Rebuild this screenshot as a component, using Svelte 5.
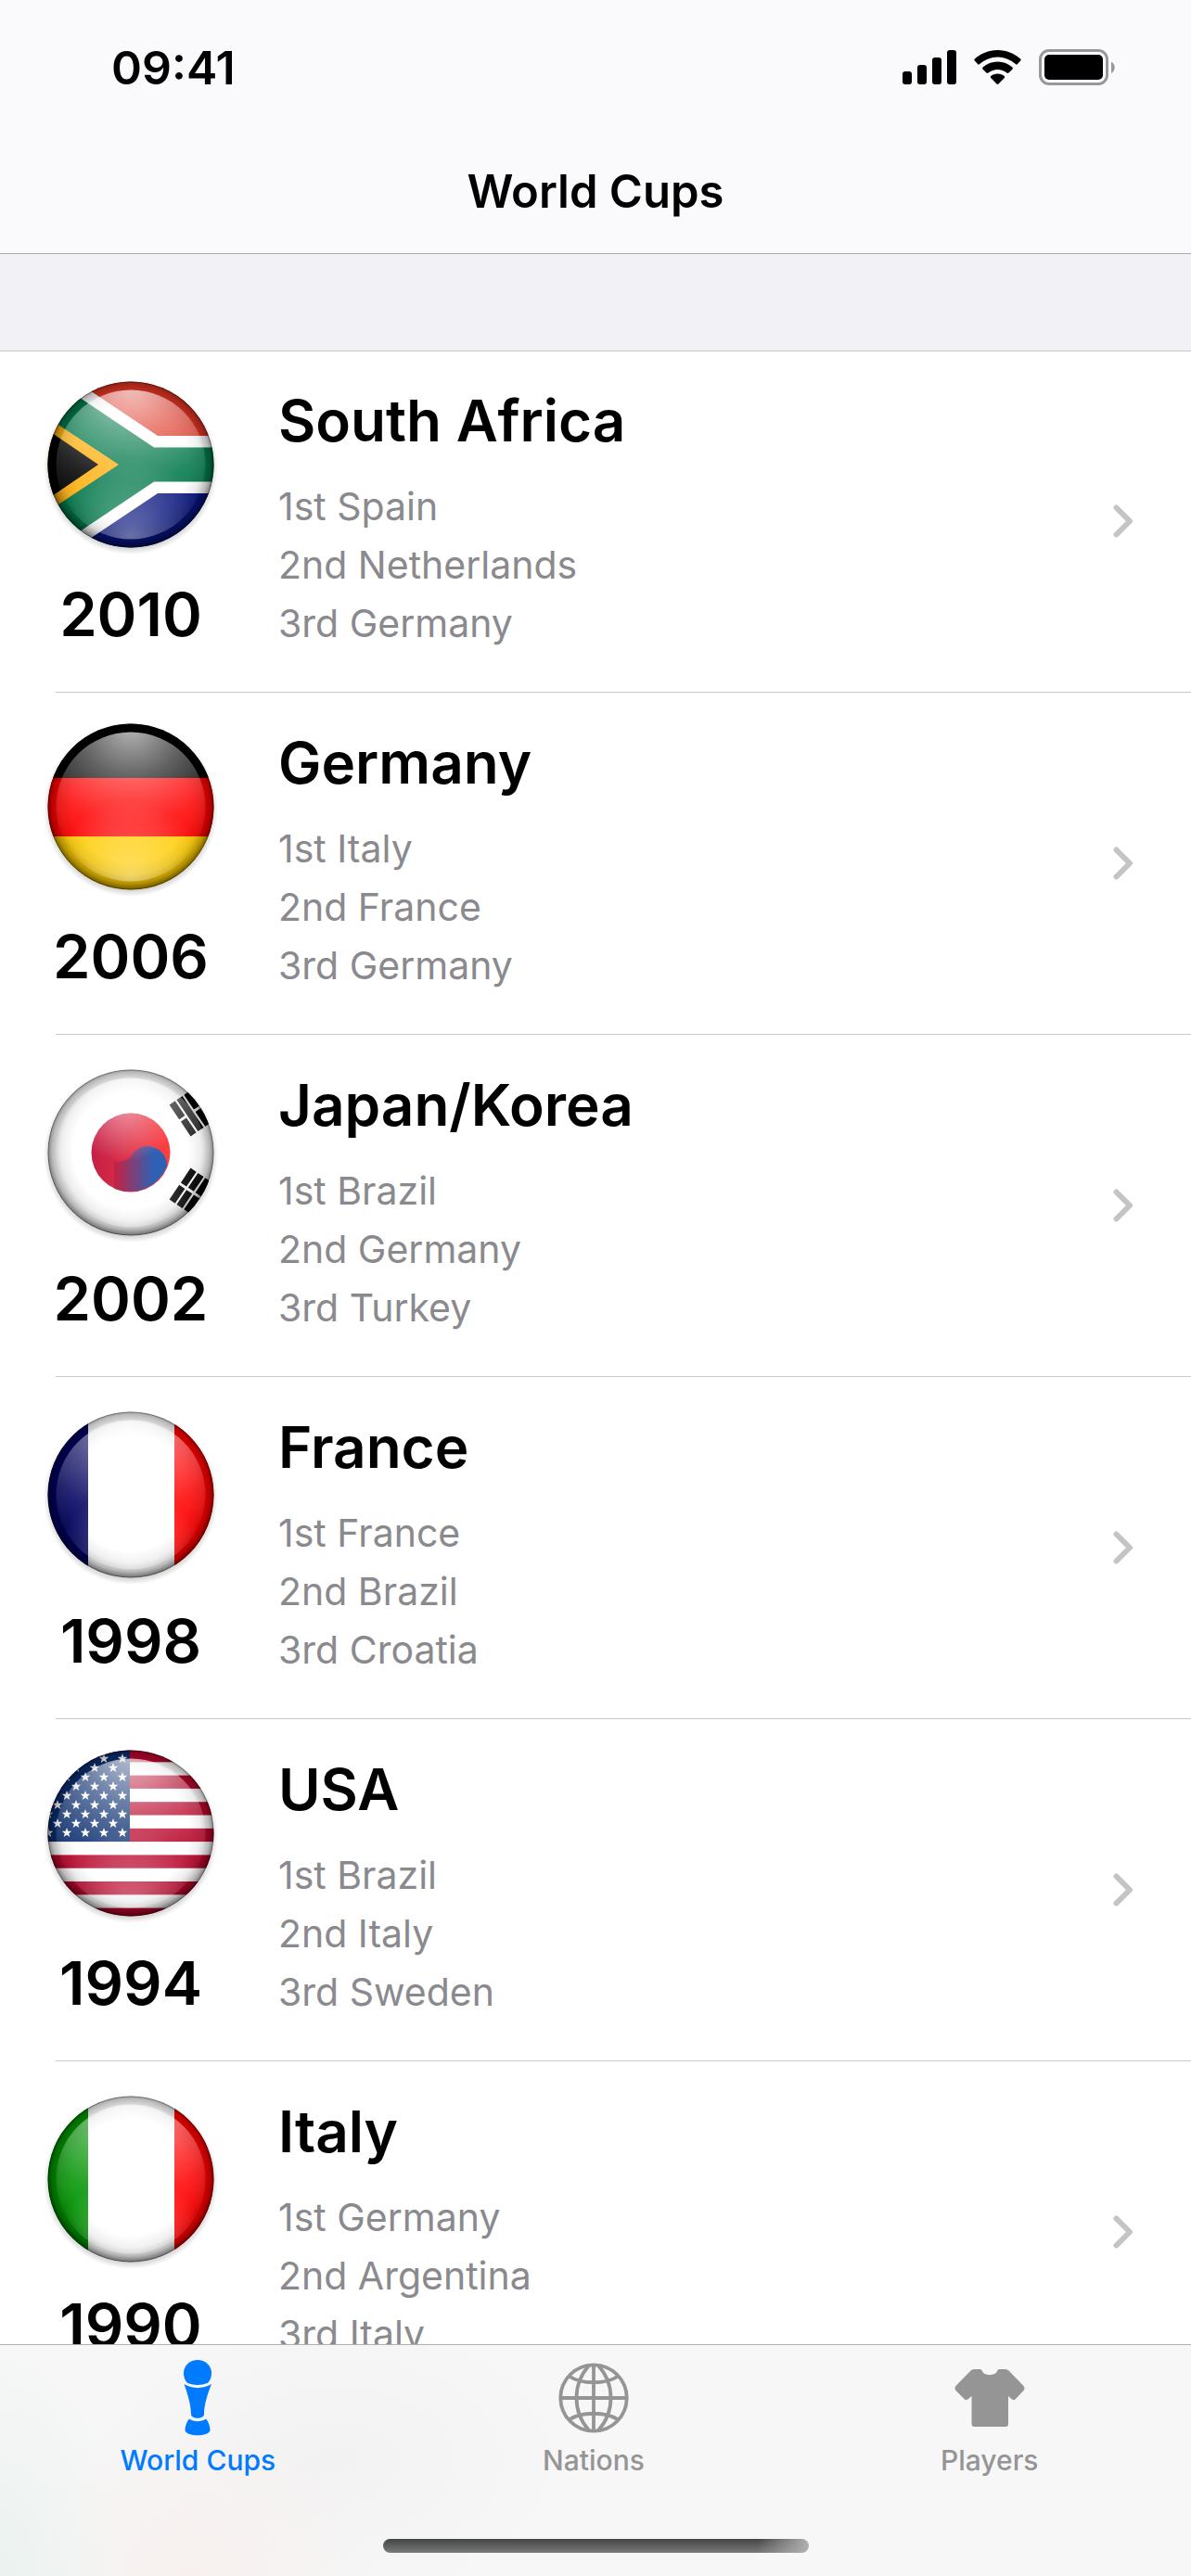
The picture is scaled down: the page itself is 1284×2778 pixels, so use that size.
<script lang="ts">
	type Cup = {
		year: number;
		host: string;
		flag: string;
		// the icons do not all sit at the same height in their box
		drop: number;
		podium: string[];
	};

	const cups: Cup[] = [
		{ year: 2010, host: 'South Africa', flag: 'za', drop: 0, podium: ['1st Spain', '2nd Netherlands', '3rd Germany'] },
		{ year: 2006, host: 'Germany', flag: 'de', drop: 0, podium: ['1st Italy', '2nd France', '3rd Germany'] },
		{ year: 2002, host: 'Japan/Korea', flag: 'kr', drop: 4, podium: ['1st Brazil', '2nd Germany', '3rd Turkey'] },
		{ year: 1998, host: 'France', flag: 'fr', drop: 4, podium: ['1st France', '2nd Brazil', '3rd Croatia'] },
		{ year: 1994, host: 'USA', flag: 'us', drop: 0, podium: ['1st Brazil', '2nd Italy', '3rd Sweden'] },
		{ year: 1990, host: 'Italy', flag: 'it', drop: 4, podium: ['1st Germany', '2nd Argentina', '3rd Italy'] }
	];

	const tabs = [
		{ id: 'cups', label: 'World Cups' },
		{ id: 'nations', label: 'Nations' },
		{ id: 'players', label: 'Players' }
	];

	let active = $state('cups');

	const STAR = 'M0-5.6 1.4-1.8 5.3-1.7 2.2.7 3.3 4.5 0 2.3-3.3 4.5-2.2.7-5.3-1.7-1.4-1.8Z';

	const stars: { x: number; y: number }[] = [];
	for (let row = 0; row < 9; row++) {
		const start = row % 2 === 0 ? -9 : -19;
		for (let col = 0; col < 5; col++) {
			stars.push({ x: start - col * 20, y: -80.5 + row * 10 });
		}
	}
</script>

<svelte:head>
	<title>World Cups</title>
</svelte:head>

{#snippet flagArt(code: string)}
	{#if code === 'za'}
		<rect x="-100" y="-100" width="200" height="100" fill="#dd3322" />
		<rect x="-100" width="200" height="100" fill="#06137c" />
		<path d="M-110-124 29-31H100V31H29L-110 124Z" fill="#fff" />
		<path d="M-110-109 25-18.500H100V18.500H25L-110 109Z" fill="#007749" />
		<path d="M-110-64-13 0-110 64Z" fill="#ffb010" />
		<path d="M-110-51-35 0-110 51Z" fill="#000" />
	{:else if code === 'de'}
		<rect x="-100" y="-100" width="200" height="69" fill="#000" />
		<rect x="-100" y="-31" width="200" height="63" fill="#ff0000" />
		<rect x="-100" y="32" width="200" height="70" fill="#ffcc00" />
	{:else if code === 'kr'}
		<rect x="-100" y="-100" width="200" height="200" fill="#fff" />
		<g fill="#000">
			<g transform="translate(64 -42) rotate(56)">
				<path d="M-20.500 5.800h19v7.400h-19zM1.500 5.800h19v7.400h-19zM-20.500-3.700h41v7.400h-41zM-20.500-13.200h19v7.400h-19zM1.500-13.200h19v7.400h-19z" />
			</g>
			<g transform="translate(64 41) rotate(-56)">
				<path d="M-20.500 5.800h19v7.400h-19zM1.500 5.800h19v7.400h-19zM-20.500-3.700h19v7.400h-19zM1.500-3.700h19v7.400h-19zM-20.500-13.200h19v7.400h-19zM1.500-13.200h19v7.400h-19z" />
			</g>
		</g>
	{:else if code === 'us'}
		<rect x="-100" y="-100" width="200" height="200" fill="#fff" />
		{#each [0, 2, 4, 6, 8, 10, 12] as stripe}
			<rect x="-100" y={-91 + stripe * 14.3} width="200" height="14.3" fill="#b8062b" />
		{/each}
		<rect x="-100" y="-100" width="99" height="109" fill="#0a2d6e" />
		{#each stars as star}
			<path d={STAR} transform="translate({star.x} {star.y})" fill="#fff" />
		{/each}
	{:else}
		<rect x="-100" y="-100" width="200" height="200" fill="#fff" />
		<rect x="-100" y="-100" width="54" height="200" fill={code === 'fr' ? '#00005e' : '#009200'} />
		<rect x="47" y="-100" width="54" height="200" fill="#ff0000" />
	{/if}
{/snippet}

{#snippet flagIcon(code: string, drop: number)}
	<svg class="flag" viewBox="-100 -100 200 200" aria-hidden="true">
		<defs>
			<clipPath id="disc-{code}"><circle r="89.500" /></clipPath>
			<radialGradient id="edge-{code}" gradientUnits="userSpaceOnUse" cx="0" cy="-2" r="92">
				<stop offset="0.680" stop-opacity="0" />
				<stop offset="0.820" stop-opacity="0.080" />
				<stop offset="0.920" stop-opacity="0.270" />
				<stop offset="1" stop-opacity="0.600" />
			</radialGradient>
			<radialGradient id="top-{code}" gradientUnits="userSpaceOnUse" cx="0" cy="-88" r="155">
				<stop offset="0" stop-color="#fff" stop-opacity="0.720" />
				<stop offset="0.350" stop-color="#fff" stop-opacity="0.400" />
				<stop offset="0.700" stop-color="#fff" stop-opacity="0.140" />
				<stop offset="1" stop-color="#fff" stop-opacity="0" />
			</radialGradient>
			<radialGradient id="low-{code}" gradientUnits="userSpaceOnUse" cx="0" cy="78" r="84">
				<stop offset="0" stop-color="#fff" stop-opacity="0.400" />
				<stop offset="1" stop-color="#fff" stop-opacity="0" />
			</radialGradient>
			<radialGradient id="shade-{code}">
				<stop offset="0.860" stop-opacity="0.300" />
				<stop offset="1" stop-opacity="0" />
			</radialGradient>
			{#if code === 'kr'}
				<linearGradient id="taeguk-red">
					<stop offset="0" stop-color="#c41f45" />
					<stop offset="0.400" stop-color="#d92c48" />
					<stop offset="1" stop-color="#ff4040" />
				</linearGradient>
				<linearGradient id="taeguk-blue" gradientUnits="userSpaceOnUse" x1="-18" y1="0" x2="24" y2="0">
					<stop offset="0" stop-color="#c8213f" />
					<stop offset="1" stop-color="#2e60b4" />
				</linearGradient>
				<radialGradient id="taeguk-shine" gradientUnits="userSpaceOnUse" cx="-6" cy="-52" r="62">
					<stop offset="0" stop-color="#fff" stop-opacity="0.500" />
					<stop offset="1" stop-color="#fff" stop-opacity="0" />
				</radialGradient>
			{/if}
		</defs>
		<g transform="translate(0 {drop})">
			<circle cy="3" r="94" fill="url(#shade-{code})" />
			<g clip-path="url(#disc-{code})">
				{@render flagArt(code)}
				<circle r="90" fill="url(#edge-{code})" />
				<circle r="80.500" fill="url(#top-{code})" />
				<circle r="80.500" fill="url(#low-{code})" />
				{#if code === 'kr'}
					<circle r="42.500" fill="url(#taeguk-red)" />
					<path d="M-18 10C-2 10 0 4 4-1A20.700 20.700 0 0 1 39 14A42.500 42.500 0 0 1-18 38.500Z" fill="url(#taeguk-blue)" />
					<circle r="42.500" fill="url(#taeguk-shine)" />
				{/if}
			</g>
			<circle r="89" fill="none" stroke="#000" stroke-opacity="0.300" />
		</g>
	</svg>
{/snippet}

{#snippet tabIcon(id: string)}
	<svg class="tab-icon" viewBox="0 0 84 84" aria-hidden="true">
		{#if id === 'cups'}
			<g fill="currentColor">
				<path d="M42 1C50 1 57 7 57 15C57 20 55 24 52.500 26C46 28.500 38 28.500 31.500 26C29 24 27 20 27 15C27 7 34 1 42 1Z" />
				<path d="M27.500 27C36 32.500 48 32.500 57 27C53 37 49 49 49 60C48 65 36 65 35 60C35 49 31 37 27.500 27Z" />
				<path d="M33 64.500C38 68 46 68 51 64.500C54 68 55.500 73 55.500 77C54 84 30 84 28.500 77C28.500 73 30 68 33 64.500Z" />
			</g>
		{:else if id === 'nations'}
			<g fill="none" stroke="currentColor" stroke-width="3.800">
				<circle cx="42" cy="42" r="35.700" />
				<path d="M42 6V78M6 42H78M37 7C19 27 19 57 37 77M47 7C65 27 65 57 47 77M15.500 18.500C29 27.500 55 27.500 68.500 18.500M15.500 65.500C29 56.500 55 56.500 68.500 65.500" />
			</g>
		{:else}
			<path
				d="M25 11H31.500Q33.500 11 34 13C35.500 18.500 48.500 18.500 50 13Q50.500 11 52.500 11H59Q61 11 62.500 12.500L78.500 29Q80.500 31.500 78.500 34L69.500 43.500Q67.500 45 65.500 43L62 40V70Q62 73 59 73H25.500Q22.500 73 22.500 70V40L19 43Q17 45 15 43.500L5.500 34Q3.500 31.500 5.500 29L21.500 12.500Q23 11 25 11Z"
				fill="currentColor"
			/>
		{/if}
	</svg>
{/snippet}

<div class="app">
	<header class="top-bar">
		<div class="status">
			<span class="time">09:41</span>
			<svg class="status-icons" viewBox="0 0 230 40" aria-hidden="true">
				<rect x="0" y="24" width="10" height="14" rx="3" />
				<rect x="16" y="17" width="10" height="21" rx="3" />
				<rect x="32" y="9" width="10" height="29" rx="3" />
				<rect x="48" y="1" width="10" height="37" rx="3" />
				<path d="M102.500 1C112 1 121 5 127.200 10.500Q128.300 11.500 127.200 12.600L124 16Q123 17 121.900 16C116 11 109.500 8.500 102.500 8.500C95.500 8.500 89 11 83.100 16Q82 17 81 16L77.800 12.600Q76.700 11.500 77.800 10.500C84 5 93 1 102.500 1Z" />
				<path d="M102.500 13.500C108.500 13.500 114 15.800 118.400 19.500Q119.500 20.600 118.400 21.700L114.500 25.500Q113.500 26.300 112.400 25.500C106.500 20.700 98.500 20.700 92.600 25.500Q91.500 26.300 90.500 25.500L86.600 21.700Q85.500 20.600 86.600 19.500C91 15.800 96.500 13.500 102.500 13.500Z" />
				<path d="M102.500 26.500C105.500 26.500 108 27.400 109.800 29Q110.800 30 109.800 31L103.500 37.500Q102.500 38.300 101.500 37.500L95.200 31Q94.200 30 95.200 29C97 27.400 99.500 26.500 102.500 26.500Z" />
				<rect x="148.500" y="1.500" width="72" height="36" rx="9.500" fill="none" stroke="#98989a" stroke-width="3" />
				<rect x="153" y="6" width="63" height="27" rx="5" />
				<path d="M225 13.500C230 16 230 23.500 225 26Z" fill="#98989a" />
			</svg>
		</div>
		<h1>World Cups</h1>
	</header>

	<main>
		<ul class="cups">
			{#each cups as cup}
				<li>
					<a class="cup" href="#{cup.year}">
						<div class="edition">
							{@render flagIcon(cup.flag, cup.drop)}
							<span class="year">{cup.year}</span>
						</div>
						<div class="details">
							<h2>{cup.host}</h2>
							{#each cup.podium as place}
								<p>{place}</p>
							{/each}
						</div>
						<svg class="chevron" viewBox="0 0 22 36" aria-hidden="true">
							<path d="M3.500 3.500 18 18 3.500 32.500" />
						</svg>
					</a>
				</li>
			{/each}
		</ul>
	</main>

	<footer>
		<nav>
			{#each tabs as tab}
				<a class="tab" class:active={active === tab.id} href="#{tab.id}" onclick={() => (active = tab.id)}>
					{@render tabIcon(tab.id)}
					<span>{tab.label}</span>
				</a>
			{/each}
		</nav>
		<div class="home-indicator"></div>
	</footer>
</div>

<style>
	:global(body) {
		margin: 0;
		background: #fff;
	}
	.app {
		display: flex;
		flex-direction: column;
		height: 100vh;
		font-family: Inter, 'Liberation Sans', sans-serif;
		color: #000;
	}
	a {
		color: inherit;
		text-decoration: none;
	}
	h1,
	h2,
	p {
		margin: 0;
	}

	/* top bar */
	.top-bar {
		flex: none;
		background: #fafafc;
		border-bottom: 1px solid #a9a9ae;
	}
	.status {
		display: flex;
		align-items: center;
		justify-content: space-between;
		height: 141px;
		padding: 4px 81px 0 120px;
		box-sizing: border-box;
	}
	.time {
		font-size: 50px;
		font-weight: 600;
	}
	.status-icons {
		width: 230px;
		height: 40px;
	}
	h1 {
		font-size: 49px;
		font-weight: 600;
		line-height: 132px;
		text-align: center;
	}

	/* list */
	main {
		flex: 1;
		min-height: 0;
		overflow-y: auto;
		scrollbar-width: none;
		padding-top: 104px;
		background: #f2f1f6;
	}
	.cups {
		margin: 0;
		padding: 0;
		list-style: none;
		background: #fff;
		box-shadow: inset 0 1px #c7c7cb;
	}
	.cup {
		display: flex;
		align-items: center;
		height: 368px;
		padding-right: 62px;
	}
	/* separator starts in from the left edge */
	li::after {
		content: '';
		display: block;
		height: 1px;
		margin-left: 60px;
		background: #c7c7c9;
	}
	.edition {
		display: flex;
		flex-direction: column;
		align-items: center;
		align-self: flex-start;
		width: 282px;
		padding-top: 23px;
	}
	.flag {
		width: 200px;
		height: 200px;
	}
	.year {
		margin-top: 22px;
		font-size: 65px;
		font-weight: 600;
		line-height: 80px;
	}
	.details {
		flex: 1;
		align-self: flex-start;
		padding: 36px 0 0 18px;
	}
	h2 {
		margin-bottom: 21px;
		font-size: 62px;
		font-weight: 600;
		line-height: 80px;
	}
	p {
		font-size: 41px;
		line-height: 63px;
		color: #8a8a8e;
	}
	.chevron {
		width: 22px;
		height: 36px;
		fill: none;
		stroke: #c4c4c6;
		stroke-width: 6;
		stroke-linecap: round;
		stroke-linejoin: round;
	}

	/* tab bar */
	footer {
		flex: none;
		height: 249px;
		border-top: 1px solid #b0b0b1;
		background:
			radial-gradient(ellipse 140px 260px at 0 100%, #ebf2f0, transparent),
			radial-gradient(ellipse 200px 180px at 16% 100%, #f7f0ee, transparent),
			radial-gradient(ellipse 260px 160px at 28% 50%, #f2f2f2, transparent),
			#f7f7f7;
	}
	nav {
		display: flex;
		padding-right: 4px;
	}
	.tab {
		flex: 1;
		display: flex;
		flex-direction: column;
		align-items: center;
		padding-top: 15px;
		font-size: 30px;
		font-weight: 500;
		line-height: 36px;
		color: #959595;
	}
	.tab.active {
		color: #007aff;
	}
	.tab-icon {
		width: 84px;
		height: 84px;
		margin-bottom: 7px;
	}
	.home-indicator {
		width: 459px;
		height: 15px;
		margin: 67px auto 0;
		border-radius: 8px;
		background:
			linear-gradient(to right, transparent 88%, #b0b0b0),
			linear-gradient(#434444, #7a7a7a);
	}
</style>
